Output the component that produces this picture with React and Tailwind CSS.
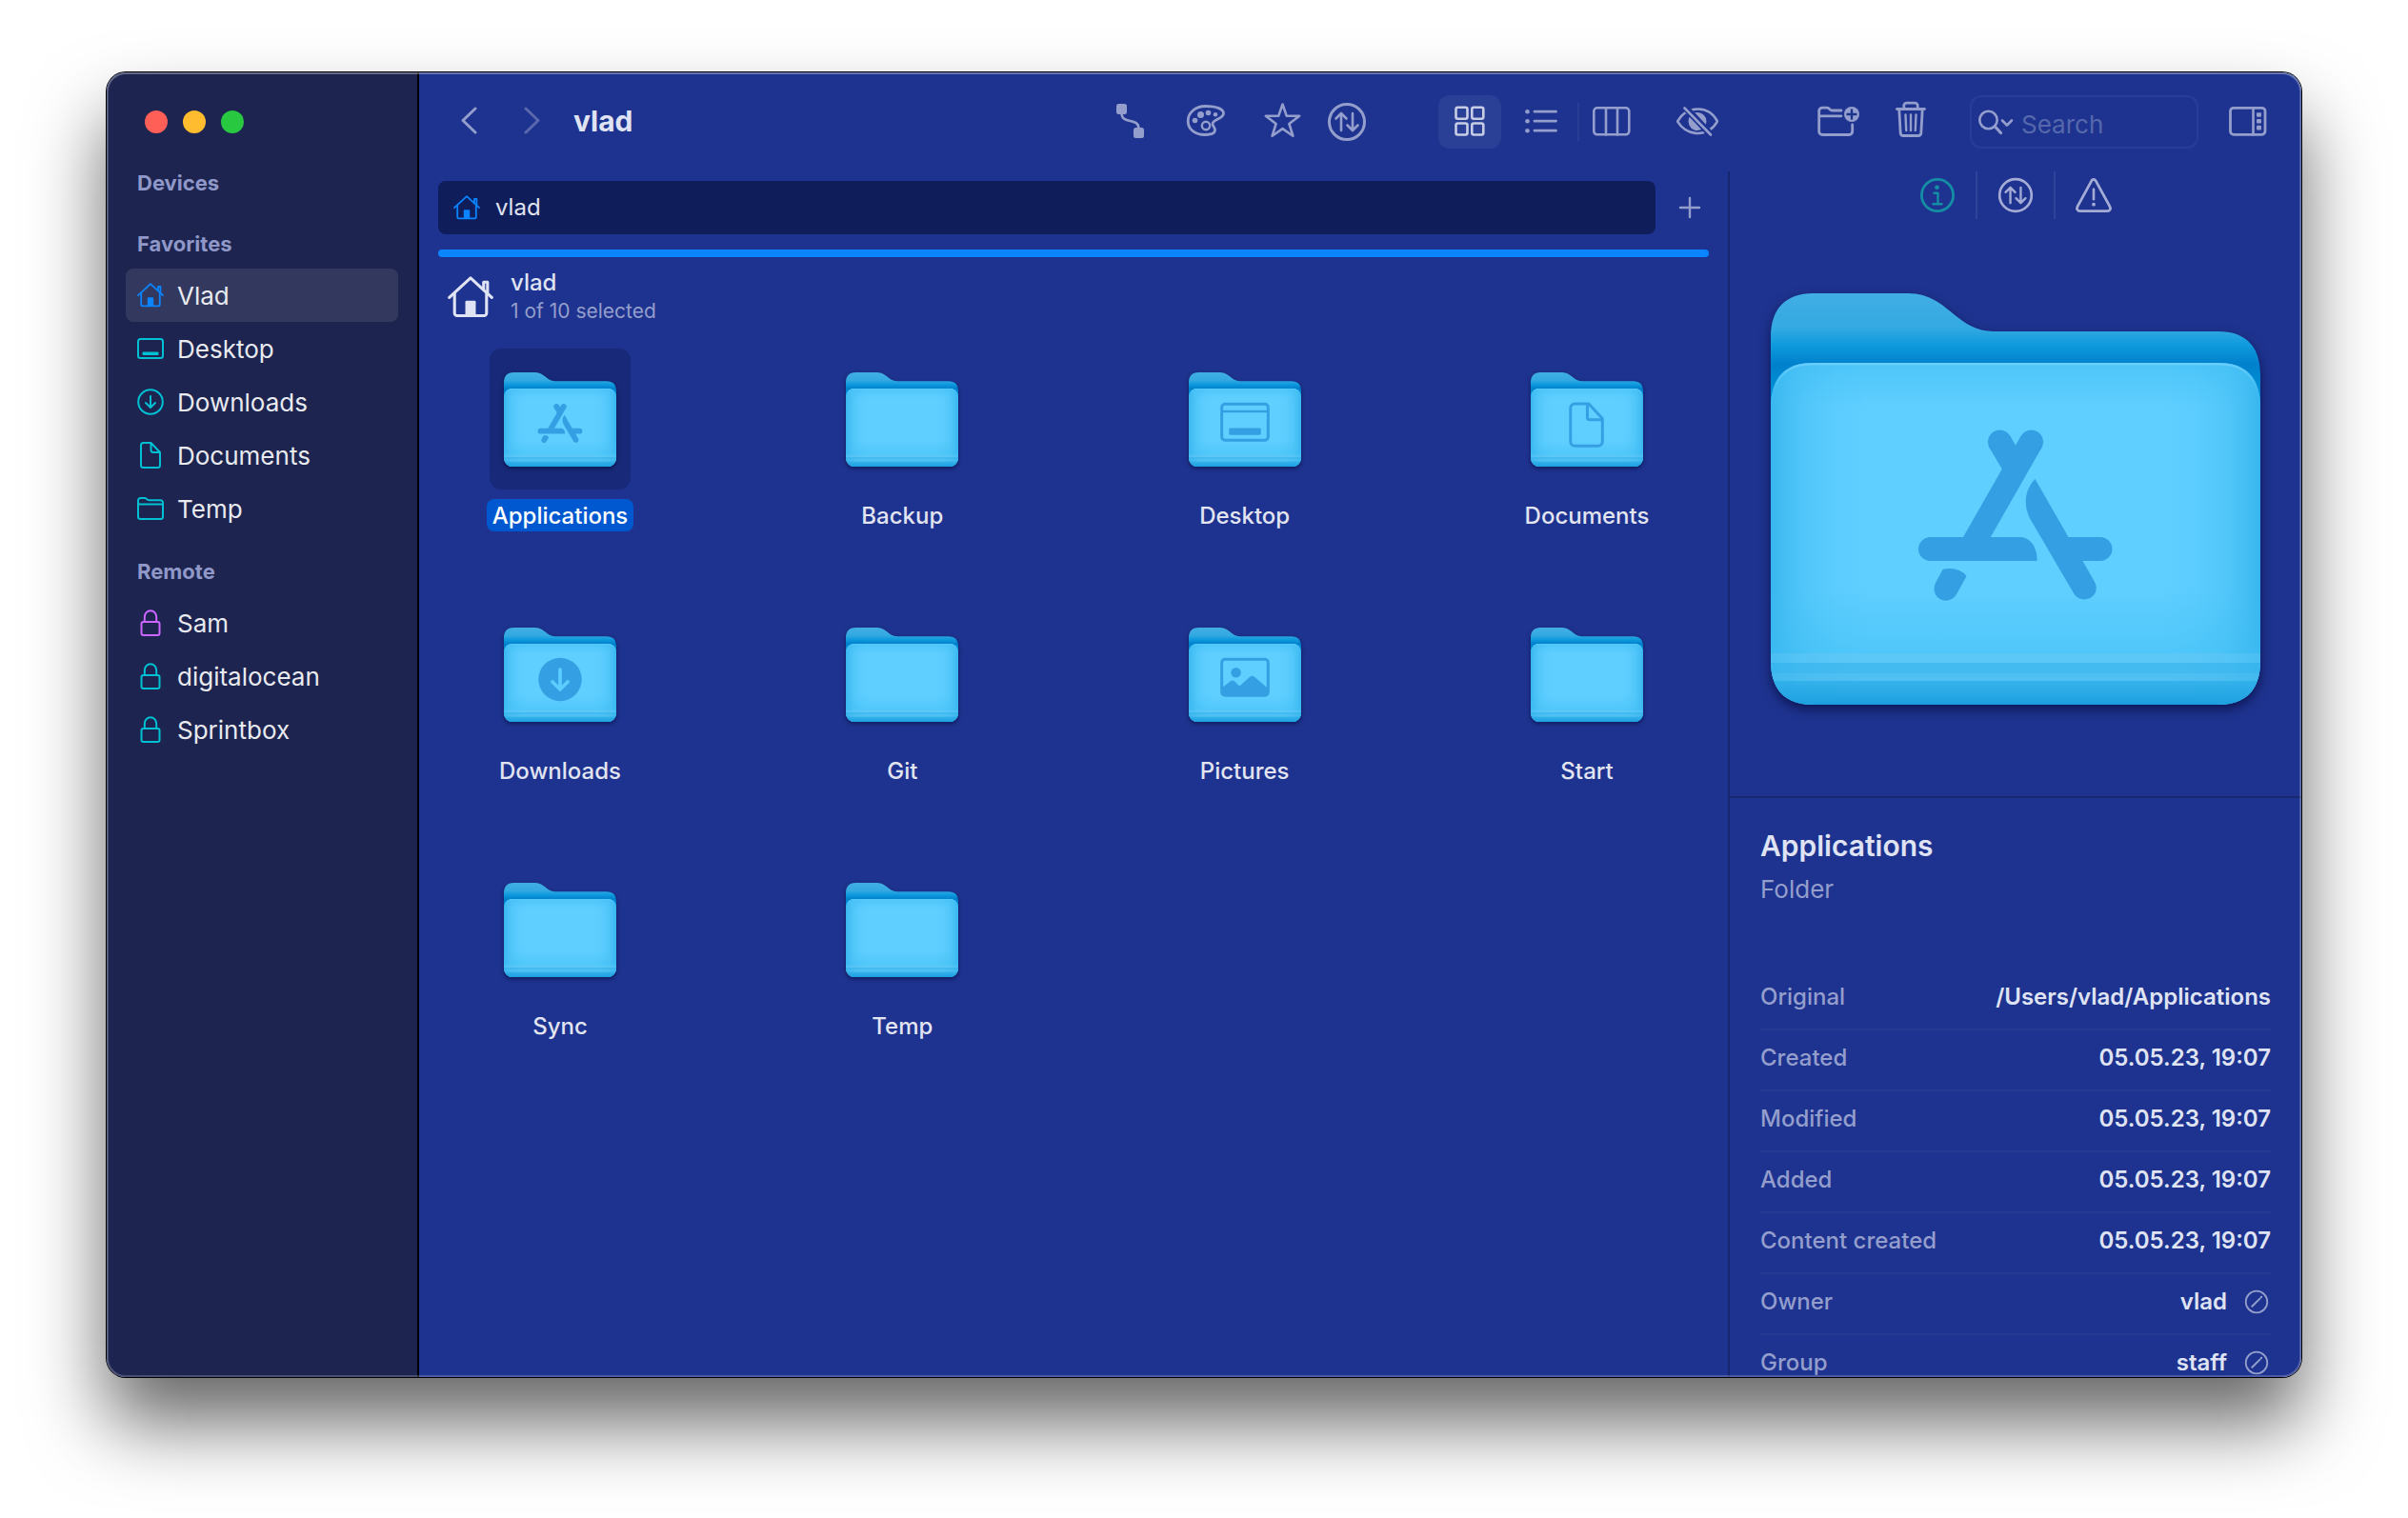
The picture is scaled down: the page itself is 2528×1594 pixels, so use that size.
import React from "react";

/* ---------- line icons ---------- */

function Icon({ size = 44, className = "", children, stroke = 3 }) {
  return (
    <svg
      width={size}
      height={size}
      viewBox={`0 0 ${size} ${size}`}
      fill="none"
      stroke="currentColor"
      strokeWidth={stroke}
      strokeLinecap="round"
      strokeLinejoin="round"
      className={className}
      aria-hidden="true"
    >
      {children}
    </svg>
  );
}

function House({ className }) {
  return (
    <svg
      viewBox="0 0 28 28"
      fill="none"
      stroke="currentColor"
      strokeWidth="1.8"
      strokeLinecap="round"
      strokeLinejoin="round"
      className={className}
      aria-hidden="true"
    >
      <path d="M1 14.2 14 2.2l13 12" />
      <path d="M4.2 12v11.8A1.6 1.6 0 0 0 5.8 25.4H22.2a1.6 1.6 0 0 0 1.6-1.6V12" />
      <path d="M22 9V4.8h2.4v6.4" />
      <path d="M10.8 25.4v-8.4a.8.8 0 0 1 .8-.8h4.8a.8.8 0 0 1 .8.8v8.4z" fill="currentColor" stroke="none" />
    </svg>
  );
}

const DesktopIcon = () => (
  <Icon size={28} stroke={2}>
    <rect x="1" y="4" width="26" height="20" rx="2.5" />
    <rect x="5.5" y="17.5" width="17" height="3.5" rx="1" fill="currentColor" stroke="none" />
  </Icon>
);

const DownloadIcon = () => (
  <Icon size={28} stroke={2}>
    <circle cx="14" cy="14" r="12.8" />
    <path d="M14 8v11.5M9 15l5 5 5-5" />
  </Icon>
);

const DocumentIcon = () => (
  <Icon size={28} stroke={2}>
    <path d="M6 1h8.5L24 11v13.5A2.5 2.5 0 0 1 21.5 27h-15A2.5 2.5 0 0 1 4 24.5v-21A2.5 2.5 0 0 1 6.5 1zM14.5 1v7.5A2.5 2.5 0 0 0 17 11h7" />
  </Icon>
);

const FolderIcon = () => (
  <Icon size={28} stroke={2}>
    <path d="M1 22.5v-17A2.5 2.5 0 0 1 3.5 3h4.2c.8 0 1.4.2 2 .7l1.2 1c.5.4 1 .6 1.7.6h11.9A2.5 2.5 0 0 1 27 7.8v14.7a2.5 2.5 0 0 1-2.5 2.5h-21A2.5 2.5 0 0 1 1 22.5zM1 9.5h26" />
  </Icon>
);

const LockIcon = () => (
  <Icon size={28} stroke={2}>
    <rect x="4.5" y="13" width="19" height="14" rx="2" />
    <path d="M7.8 13V8a6.2 6.8 0 0 1 12.4 0v5" />
  </Icon>
);

const ConnectIcon = () => (
  <Icon>
    <rect x="8" y="3" width="11" height="11" rx="2.5" fill="currentColor" stroke="none" />
    <rect x="26" y="28" width="11" height="11" rx="2.5" fill="currentColor" stroke="none" />
    <path d="M13.5 13c0 12 18 4 18 16" strokeWidth="2.6" />
  </Icon>
);

const PaletteIcon = () => (
  <Icon>
    <path
      d="M21.5 5.5C11 5.5 3.2 12.2 3.2 21.2 3.2 30 11 35.5 20.5 35.5c5.5 0 11-1 11-5 0-3-2.5-4-2.5-6.5 0-4.5 11.5-5 11.5-11C40.5 8 32 5.5 21.5 5.5z"
      strokeWidth="2.8"
    />
    <g fill="currentColor" stroke="none">
      <circle cx="10.5" cy="20.5" r="2.8" />
      <circle cx="16.5" cy="14.5" r="3.5" />
      <circle cx="24.5" cy="12.5" r="2.8" />
      <circle cx="32" cy="14.3" r="2.3" />
    </g>
    <circle cx="22" cy="26" r="4.2" strokeWidth="2.4" />
  </Icon>
);

const StarIcon = () => (
  <Icon stroke={2.6}>
    <path d="M22.5 3.5 26.7 15.7h13.5L29.4 24l4 12.7-10.9-7.6-10.9 7.6 4-12.7L4.8 15.7h13.5z" />
  </Icon>
);

const TransferIcon = ({ size = 44 }) => (
  <svg
    width={size}
    height={size}
    viewBox="0 0 44 44"
    fill="none"
    stroke="currentColor"
    strokeWidth="3"
    strokeLinecap="round"
    strokeLinejoin="round"
    aria-hidden="true"
  >
    <circle cx="22" cy="22" r="18.5" />
    <g strokeWidth="2.6">
      <path d="M16 31V13.5M10.5 18.5l5.5-5.5 5.5 5.5" />
      <path d="M28 13v17.5M22.5 25.5 28 31l5.5-5.5" />
    </g>
  </svg>
);

const GridIcon = () => (
  <Icon stroke={2.6}>
    <rect x="7.5" y="6.8" width="12" height="12" rx="2" />
    <rect x="24.3" y="6.8" width="12" height="12" rx="2" />
    <rect x="7.5" y="23.5" width="12" height="12" rx="2" />
    <rect x="24.3" y="23.5" width="12" height="12" rx="2" />
  </Icon>
);

const ListIcon = () => (
  <Icon stroke={2.8}>
    <path d="M15 11.2h22.5M15 21.2h22.5M15 31.2h22.5" />
    <g fill="currentColor" stroke="none">
      <circle cx="7.5" cy="11.2" r="2.3" />
      <circle cx="7.5" cy="21.2" r="2.3" />
      <circle cx="7.5" cy="31.2" r="2.3" />
    </g>
  </Icon>
);

const ColumnsIcon = () => (
  <Icon stroke={2.6}>
    <rect x="3.3" y="7.3" width="37" height="28" rx="3.5" />
    <path d="M16 7.5v28M28 7.5v28" />
  </Icon>
);

const EyeOffIcon = () => (
  <Icon>
    <path d="M1 21.5C6 13 13.5 8.5 22.5 8.5S38.5 13 43 21.5c-4.5 8-11.5 12.5-20.5 12.5S6 29.5 1 21.5z" strokeWidth="2.6" />
    <circle cx="22" cy="21.5" r="9.5" fill="currentColor" stroke="none" />
    <path d="M7 4.5 37 36.5" stroke="#1e338f" strokeWidth="7" strokeLinecap="butt" />
    <path d="M8.5 7.5 36 35.5" strokeWidth="2.6" />
  </Icon>
);

const NewFolderIcon = () => (
  <Icon stroke={2.8}>
    <path d="M25 10H15.5c-1 0-1.6-.3-2.3-1l-1-1C11.5 7.4 11 7.1 10 7.1H5.2A3.5 3.5 0 0 0 1.7 10.5v21.5A3.5 3.5 0 0 0 5.2 35.5h28a3.5 3.5 0 0 0 3.5-3.5V25M2 15.8h23" />
    <circle cx="36" cy="14" r="8" fill="currentColor" stroke="none" />
    <path d="M36 9.5v9M31.5 14h9" stroke="#1e338f" strokeWidth="2.4" />
  </Icon>
);

const TrashIcon = () => (
  <Icon stroke={2.8}>
    <path d="M7.5 8.5h29M14.8 8V5A2.8 2.8 0 0 1 17.6 2.2h8.8A2.8 2.8 0 0 1 29.2 5v3M9.8 9l1.4 25A3 3 0 0 0 14.2 36.5h15.6a3 3 0 0 0 3-2.5L34.2 9" />
    <path d="m16.5 14.5.7 16.5M22 14.5v16.5M27.5 14.5l-.7 16.5" strokeWidth="2.4" />
  </Icon>
);

const SidebarRightIcon = () => (
  <Icon stroke={2.8}>
    <rect x="3.5" y="7.3" width="36.5" height="28" rx="3.5" />
    <path d="M27.5 7.5v28" strokeWidth="2.6" />
    <g fill="currentColor" stroke="none">
      <rect x="31" y="12.2" width="5" height="4.6" rx="1" />
      <rect x="31" y="19" width="5" height="4.6" rx="1" />
      <rect x="31" y="25.8" width="5" height="4.6" rx="1" />
    </g>
  </Icon>
);

const InfoIcon = () => (
  <Icon size={40} stroke={2.8}>
    <circle cx="20" cy="20" r="16.6" />
    <circle cx="19.5" cy="11.8" r="2.4" fill="currentColor" stroke="none" />
    <path d="M16.5 17.7h4v11.5M15.5 29.2h9" strokeWidth="2.4" />
  </Icon>
);

const WarningIcon = () => (
  <Icon size={40} stroke={2.8}>
    <path d="M17.8 4.8 3 31.8C1.7 34.3 3 36.6 5.6 36.6h28.8c2.6 0 3.900-2.300 2.600-4.800L22.200 4.800c-1-1.800-3.400-1.800-4.400 0z" />
    <path d="M20 13.8v10.5" strokeWidth="2.6" />
    <circle cx="20" cy="29.7" r="1.9" fill="currentColor" stroke="none" />
  </Icon>
);

const EditIcon = () => (
  <Icon size={26} stroke={1.8}>
    <circle cx="13" cy="13" r="11.3" />
    <path d="m8.3 17.8 8.2-8.2" strokeWidth="2" />
    <path d="m17.8 8.2.3-.3" strokeWidth="2.2" />
  </Icon>
);

/* ---------- folder artwork ---------- */

const GLYPH = "#359fe3";

const FRONT =
  "M0 120C0 88 16 73 44 73h426c28 0 44 15 44 47v266c0 30-15 46-44 46H44C15 432 0 416 0 386z";

const glyphs = {
  apps: (
    <g fill={GLYPH}>
      <g fill="none" stroke={GLYPH} strokeWidth="25">
        <path d="M273.5 156 209 269" />
        <path d="M273.5 156h.01M240.5 156h.01" strokeLinecap="round" />
        <path d="m240.5 156 17 29" />
      </g>
      <path d="M167.5 256H262c12 1 18 12 17.5 25h-112a12.5 12.5 0 0 1 0-25z" />
      <path d="m277.5 195 35 61H346a12.5 12.5 0 0 1 0 25h-18.5l12.5 22c8 15-13 26-22 12L273 238c-8-15-7-31 4.5-43z" />
      <path d="M180.5 290c10-2.5 20 .5 25 7l-10.5 19c-9 14-29 4-22-12z" />
    </g>
  ),
  desktop: (
    <g fill="none" stroke={GLYPH} strokeWidth="13">
      <rect x="151" y="145" width="212" height="165" rx="15" />
      <path d="M151 179h212" strokeWidth="11" />
      <rect x="184" y="255" width="146" height="31" rx="6" fill={GLYPH} stroke="none" />
    </g>
  ),
  documents: (
    <g fill="none" stroke={GLYPH} strokeWidth="13" strokeLinejoin="round">
      <path d="M202 144h63l63 67v106a20 20 0 0 1-20 20H202a20 20 0 0 1-20-20V164a20 20 0 0 1 20-20z" />
      <path d="M259 146v61a10 10 0 0 0 10 10h57" />
    </g>
  ),
  downloads: (
    <g>
      <circle cx="257" cy="237" r="99" fill={GLYPH} />
      <path
        d="M257 192v86M222 248l35 35 35-35"
        fill="none"
        stroke="#5ccdff"
        strokeWidth="16"
        strokeLinecap="round"
        strokeLinejoin="round"
      />
    </g>
  ),
  pictures: (
    <g>
      <rect x="151" y="145" width="212" height="165" rx="15" fill="none" stroke={GLYPH} strokeWidth="13" />
      <circle cx="216" cy="206" r="23" fill={GLYPH} />
      <path d="M152 276l38-30q10-8 20 0l22 22 46-42q12-9 24 0l60 52v32H156z" fill={GLYPH} />
    </g>
  ),
};

function FolderArt({ glyph, className }) {
  return (
    <svg viewBox="0 0 514 432" className={className} aria-hidden="true">
      <path
        d="M0 46C0 16 16 0 44 0h100c42 0 50 40 90 40h236c28 0 44 15 44 46v244H0z"
        fill="url(#folder-back)"
      />
      <g clipPath="url(#folder-front)">
        <path d="M0 73h514v359H0z" fill="#5fcfff" />
        <path d="M0 73h514v359H0z" fill="url(#folder-sides)" />
        <path d="M0 73h514v46H0z" fill="url(#folder-top)" />
        <path d="M0 310h514v68H0z" fill="url(#folder-low)" />
        <path d="M0 378h514v10H0z" fill="#5cc8f8" />
        <path d="M0 388h514v11H0z" fill="#43bbf1" />
        <path d="M0 399h514v8H0z" fill="#50c0f2" />
        <path d="M0 407h514v25H0z" fill="url(#folder-foot)" />
        <path d="M0 378h514v54H0z" fill="url(#folder-sides)" opacity="0.5" />
        <path d={FRONT} fill="none" stroke="url(#folder-rim)" strokeWidth="5" />
      </g>
      {glyph && glyphs[glyph]}
    </svg>
  );
}

function FolderPaints() {
  return (
    <svg width="0" height="0" className="absolute" aria-hidden="true">
      <defs>
        <clipPath id="folder-front">
          <path d={FRONT} />
        </clipPath>
        <linearGradient id="folder-back" gradientUnits="userSpaceOnUse" x1="0" y1="0" x2="0" y2="120">
          <stop offset="0" stopColor="#41aee4" />
          <stop offset="0.3" stopColor="#34a9e2" />
          <stop offset="0.45" stopColor="#0f9bdd" />
          <stop offset="0.62" stopColor="#0080cc" />
          <stop offset="1" stopColor="#009ada" />
        </linearGradient>
        <linearGradient id="folder-rim" gradientUnits="userSpaceOnUse" x1="0" y1="73" x2="0" y2="105">
          <stop offset="0" stopColor="#7ad6ff" stopOpacity="0.6" />
          <stop offset="1" stopColor="#7ad6ff" stopOpacity="0" />
        </linearGradient>
        <linearGradient id="folder-sides" x1="0" y1="0" x2="1" y2="0">
          <stop offset="0" stopColor="#22a8e6" stopOpacity="0.65" />
          <stop offset="0.03" stopColor="#22a8e6" stopOpacity="0.42" />
          <stop offset="0.07" stopColor="#22a8e6" stopOpacity="0.22" />
          <stop offset="0.13" stopColor="#22a8e6" stopOpacity="0.07" />
          <stop offset="0.2" stopColor="#22a8e6" stopOpacity="0" />
          <stop offset="0.8" stopColor="#22a8e6" stopOpacity="0" />
          <stop offset="0.87" stopColor="#22a8e6" stopOpacity="0.07" />
          <stop offset="0.93" stopColor="#22a8e6" stopOpacity="0.22" />
          <stop offset="0.97" stopColor="#22a8e6" stopOpacity="0.42" />
          <stop offset="1" stopColor="#22a8e6" stopOpacity="0.65" />
        </linearGradient>
        <linearGradient id="folder-top" x1="0" y1="0" x2="0" y2="1">
          <stop offset="0" stopColor="#3dbcf2" stopOpacity="0.5" />
          <stop offset="1" stopColor="#3dbcf2" stopOpacity="0" />
        </linearGradient>
        <linearGradient id="folder-low" x1="0" y1="0" x2="0" y2="1">
          <stop offset="0" stopColor="#3dbcf2" stopOpacity="0" />
          <stop offset="1" stopColor="#3dbcf2" stopOpacity="0.45" />
        </linearGradient>
        <linearGradient id="folder-foot" x1="0" y1="0" x2="0" y2="1">
          <stop offset="0" stopColor="#36b3ec" />
          <stop offset="1" stopColor="#1c9fdf" />
        </linearGradient>
      </defs>
    </svg>
  );
}

/* ---------- data ---------- */

const favorites = [
  { name: "Vlad", icon: <House className="size-7" />, tone: "text-[#0a84ff]", active: true },
  { name: "Desktop", icon: <DesktopIcon />, tone: "text-[#00c0d4]" },
  { name: "Downloads", icon: <DownloadIcon />, tone: "text-[#00c0d4]" },
  { name: "Documents", icon: <DocumentIcon />, tone: "text-[#00c0d4]" },
  { name: "Temp", icon: <FolderIcon />, tone: "text-[#00c0d4]" },
];

const remotes = [
  { name: "Sam", icon: <LockIcon />, tone: "text-[#cc66ff]" },
  { name: "digitalocean", icon: <LockIcon />, tone: "text-[#00c0d4]" },
  { name: "Sprintbox", icon: <LockIcon />, tone: "text-[#00c0d4]" },
];

const folders = [
  { name: "Applications", glyph: "apps", selected: true },
  { name: "Backup" },
  { name: "Desktop", glyph: "desktop" },
  { name: "Documents", glyph: "documents" },
  { name: "Downloads", glyph: "downloads" },
  { name: "Git" },
  { name: "Pictures", glyph: "pictures" },
  { name: "Start" },
  { name: "Sync" },
  { name: "Temp" },
];

const details = [
  { label: "Original", value: "/Users/vlad/Applications" },
  { label: "Created", value: "05.05.23, 19:07" },
  { label: "Modified", value: "05.05.23, 19:07" },
  { label: "Added", value: "05.05.23, 19:07" },
  { label: "Content created", value: "05.05.23, 19:07" },
  { label: "Owner", value: "vlad", editable: true },
  { label: "Group", value: "staff", editable: true },
];

/* ---------- parts ---------- */

function SidebarList({ items }) {
  return (
    <ul className="mt-3">
      {items.map((item) => (
        <li key={item.name}>
          <a
            href="#"
            className={
              item.active
                ? "flex h-14 items-center gap-3.5 rounded-lg bg-[#33395e] pl-3 text-[26px] text-[#e9eaf0]"
                : "flex h-14 items-center gap-3.5 rounded-lg pl-3 text-[26px] text-[#e9eaf0]"
            }
          >
            <span className={item.tone}>{item.icon}</span>
            {item.name}
          </a>
        </li>
      ))}
    </ul>
  );
}

function Sidebar() {
  return (
    <aside className="w-[328px] shrink-0 border-r-2 border-black bg-[#1c244f] px-5 pt-10">
      <div className="flex gap-4 pl-5">
        <button aria-label="Close" className="size-6 rounded-full bg-[#ff5f57]" />
        <button aria-label="Minimize" className="size-6 rounded-full bg-[#febc2e]" />
        <button aria-label="Zoom" className="size-6 rounded-full bg-[#28c840]" />
      </div>
      <nav className="pt-[38px]">
        <h2 className="pl-3 text-[22px] leading-7 font-bold text-[#8f98c8]">Devices</h2>
        <h2 className="mt-9 pl-3 text-[22px] leading-7 font-bold text-[#8f98c8]">Favorites</h2>
        <SidebarList items={favorites} />
        <h2 className="mt-6 pl-3 text-[22px] leading-7 font-bold text-[#8f98c8]">Remote</h2>
        <SidebarList items={remotes} />
      </nav>
    </aside>
  );
}

function Tool({ label, children }) {
  return (
    <button aria-label={label} className="size-11 shrink-0">
      {children}
    </button>
  );
}

function Toolbar() {
  return (
    <header className="flex h-[104px] shrink-0 items-center pr-[34px] pl-[30px] text-[#949ecc]">
      <div className="flex gap-[22px]">
        <Tool label="Back">
          <Icon stroke={3}>
            <path d="M29 8 16 20.5 29 33" />
          </Icon>
        </Tool>
        <Tool label="Forward">
          <Icon stroke={3} className="opacity-50">
            <path d="M16 8l13 12.5L16 33" />
          </Icon>
        </Tool>
      </div>
      <h1 className="ml-[22px] pb-0.5 text-[30px] leading-9 font-bold text-[#dfe3f3]">vlad</h1>

      <div className="ml-auto flex items-center gap-9">
        <Tool label="Connect"><ConnectIcon /></Tool>
        <Tool label="Themes"><PaletteIcon /></Tool>
        <div className="flex gap-6">
          <Tool label="Favorite"><StarIcon /></Tool>
          <Tool label="Transfers"><TransferIcon /></Tool>
        </div>
      </div>

      <div className="ml-[74px] flex items-center">
        <button
          aria-label="Icon view"
          aria-pressed="true"
          className="flex h-14 w-[66px] items-center justify-center rounded-xl bg-[#2a3f96] text-[#c8cde6]"
        >
          <GridIcon />
        </button>
        <div className="ml-5 flex items-center gap-4">
          <Tool label="List view"><ListIcon /></Tool>
          <div className="flex items-center gap-3">
            <span className="h-10 w-0.5 bg-white/5" />
            <Tool label="Column view"><ColumnsIcon /></Tool>
          </div>
        </div>
      </div>

      <div className="ml-[46px] flex">
        <Tool label="Hide hidden files"><EyeOffIcon /></Tool>
      </div>

      <div className="ml-[104px] flex gap-8">
        <Tool label="New folder"><NewFolderIcon /></Tool>
        <Tool label="Delete"><TrashIcon /></Tool>
      </div>

      <div className="ml-10 flex h-14 w-60 items-center rounded-xl border-2 border-[#283d97] pl-1.5">
        <svg
          width="38"
          height="32"
          viewBox="0 0 38 32"
          fill="none"
          stroke="currentColor"
          strokeWidth="2.6"
          strokeLinecap="round"
          strokeLinejoin="round"
          className="shrink-0"
          aria-hidden="true"
        >
          <circle cx="11.5" cy="14" r="9.2" />
          <path d="m18.5 21 6 6.5" strokeWidth="3.2" />
          <path d="m26 14.5 5 5 5-5" />
        </svg>
        <input
          type="text"
          aria-label="Search"
          placeholder="Search"
          className="ml-2 h-full w-full min-w-0 bg-transparent pt-1 text-[26px] text-white outline-none placeholder:text-[#5668ac]"
        />
      </div>
      <div className="ml-[30px] flex">
        <Tool label="Toggle inspector"><SidebarRightIcon /></Tool>
      </div>
    </header>
  );
}

function Browser() {
  return (
    <main className="min-w-0 flex-1 pt-2.5 pl-5">
      <div className="flex items-center pr-7">
        <div className="flex h-14 flex-1 items-center gap-4 rounded-lg bg-[#0f1e5b] pl-4 text-2xl text-[#e0e3f0]">
          <House className="size-7 text-[#0a84ff]" />
          vlad
        </div>
        <button aria-label="New tab" className="ml-6 text-[#949ecc]">
          <Icon size={24} stroke={2.4}>
            <path d="M12 2v20M2 12h20" />
          </Icon>
        </button>
      </div>
      <div className="mt-4 mr-5 h-2 rounded-full bg-[#0a84ff]" />

      <div className="flex h-[84px] items-center gap-[18px] pl-[10px]">
        <House className="size-12 text-[#dfe3f3]" />
        <div>
          <p className="text-2xl leading-[30px] font-medium text-[#dfe3f3]">vlad</p>
          <p className="text-[21px] leading-[30px] text-[#949ecc]">1 of 10 selected</p>
        </div>
      </div>

      <div className="mt-3 grid grid-cols-[repeat(4,148px)] justify-between gap-y-[76px] pr-[74px] pl-[54px]">
        {folders.map((f) => (
          <button key={f.name} className="flex flex-col items-center">
            <span
              className={
                f.selected
                  ? "flex size-[148px] items-center justify-center rounded-xl bg-[#172978] pt-0.5"
                  : "flex size-[148px] items-center justify-center rounded-xl pt-0.5"
              }
            >
              <FolderArt
                glyph={f.glyph}
                className="w-[118px] overflow-visible drop-shadow-[0_2px_2px_rgba(0,0,40,0.5)]"
              />
            </span>
            <span
              className={
                f.selected
                  ? "mt-2.5 h-[34px] rounded-lg bg-[#0058d0] px-1.5 text-2xl leading-[36px] font-medium whitespace-nowrap text-white"
                  : "mt-2.5 h-[34px] rounded-lg px-1.5 text-2xl leading-[36px] font-medium whitespace-nowrap text-[#e2e5f1]"
              }
            >
              {f.name}
            </span>
          </button>
        ))}
      </div>
    </main>
  );
}

function Inspector() {
  return (
    <aside className="w-[602px] shrink-0 border-l-2 border-[#17276f]">
      <div className="flex h-[50px] items-center justify-center text-[#a4acd6]">
        <button aria-label="Information" className="text-[#148ea4]">
          <InfoIcon />
        </button>
        <span className="mx-5 h-full w-0.5 bg-[#2f4499]" />
        <button aria-label="Activity">
          <TransferIcon size={40} />
        </button>
        <span className="mx-5 h-full w-0.5 bg-[#2f4499]" />
        <button aria-label="Warnings">
          <WarningIcon />
        </button>
      </div>
      <div className="flex justify-center border-b-2 border-[#17276f] pt-[78px] pb-24">
        <FolderArt
          glyph="apps"
          className="w-[514px] overflow-visible drop-shadow-[0_5px_6px_rgba(0,0,40,0.55)]"
        />
      </div>
      <section className="px-8 pt-8">
        <h2 className="text-[30px] leading-9 font-semibold text-[#dfe3f3]">Applications</h2>
        <p className="mt-3 text-[26px] leading-8 text-[#949ecc]">Folder</p>
        <table className="mt-[68px] w-full border-separate border-spacing-0 text-2xl">
          <tbody>
            {details.map((d) => (
              <tr key={d.label}>
                <th scope="row" className="h-16 border-b-2 border-[#263a94] p-0 pb-1 text-left font-medium text-[#949ecc]">
                  {d.label}
                </th>
                <td className="h-16 border-b-2 border-[#263a94] p-0 pb-1 font-semibold text-[#dfe3f3]">
                  <div className="flex items-center justify-end">
                    {d.value}
                    {d.editable && (
                      <button aria-label={`Edit ${d.label}`} className="mr-0.5 ml-[18px] text-[#949ecc]">
                        <EditIcon />
                      </button>
                    )}
                  </div>
                </td>
              </tr>
            ))}
          </tbody>
        </table>
      </section>
    </aside>
  );
}

export default function App() {
  return (
    <div className="flex h-screen overflow-hidden bg-white px-28 pt-19 pb-37 font-['Inter',sans-serif]">
      <FolderPaints />
      <div className="relative flex min-w-0 flex-1 rounded-[20px] shadow-[0_0_0_1px_#000,0_48px_80px_rgba(0,0,0,0.6)]">
        <div className="flex min-w-0 flex-1 overflow-hidden rounded-[20px] bg-[#1e338f]">
          <Sidebar />
          <div className="flex min-h-0 min-w-0 flex-1 flex-col">
            <Toolbar />
            <div className="flex min-h-0 flex-1">
              <Browser />
              <Inspector />
            </div>
          </div>
        </div>
        <div className="pointer-events-none absolute inset-0 rounded-[20px] shadow-[inset_0_0_0_2px_rgba(255,255,255,0.2),inset_0_1px_0_1px_rgba(255,255,255,0.15)]" />
      </div>
    </div>
  );
}
